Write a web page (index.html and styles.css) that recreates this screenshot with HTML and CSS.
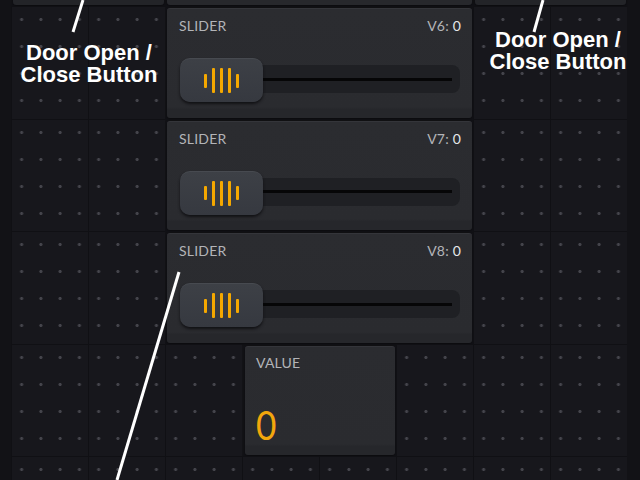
FILE: index.html
```html
<!DOCTYPE html>
<html lang="en">
<head>
  <meta charset="UTF-8" />
  <meta name="viewport" content="width=device-width, initial-scale=1" />
  <title>Slider Dashboard</title>
  <link rel="stylesheet" href="styles.css">
</head>
<body>
  <div class="board">
    <!-- widgets from the row above, only their bottoms show -->
    <div class="widget top-left"></div>
    <div class="widget top-mid"></div>
    <div class="widget top-right"></div>

    <div class="widget slider row-2">
      <div class="slider-head">
        <span class="slider-label">SLIDER</span>
        <span class="slider-pin">V6: <b>0</b></span>
      </div>
      <div class="track">
        <div class="knob"><span class="short"></span><span></span><span></span><span></span><span class="short"></span></div>
        <div class="rail"></div>
      </div>
    </div>

    <div class="widget slider row-3">
      <div class="slider-head">
        <span class="slider-label">SLIDER</span>
        <span class="slider-pin">V7: <b>0</b></span>
      </div>
      <div class="track">
        <div class="knob"><span class="short"></span><span></span><span></span><span></span><span class="short"></span></div>
        <div class="rail"></div>
      </div>
    </div>

    <div class="widget slider row-4">
      <div class="slider-head">
        <span class="slider-label">SLIDER</span>
        <span class="slider-pin">V8: <b>0</b></span>
      </div>
      <div class="track">
        <div class="knob"><span class="short"></span><span></span><span></span><span></span><span class="short"></span></div>
        <div class="rail"></div>
      </div>
    </div>

    <div class="widget value-box">
      <span class="slider-label">VALUE</span>
      <span class="value-num">0</span>
    </div>

    <!-- empty grid cells -->
    <div class="cell"></div><div class="cell"></div><div class="cell"></div><div class="cell"></div>
    <div class="cell"></div><div class="cell"></div><div class="cell"></div><div class="cell"></div>
    <div class="cell"></div><div class="cell"></div><div class="cell"></div><div class="cell"></div>
    <div class="cell"></div><div class="cell"></div><div class="cell"></div><div class="cell"></div>
    <div class="cell"></div><div class="cell"></div>
    <div class="cell"></div><div class="cell"></div><div class="cell"></div><div class="cell"></div>
    <div class="cell"></div><div class="cell"></div><div class="cell"></div><div class="cell"></div>
  </div>

  <!-- annotations -->
  <svg class="pointers" width="640" height="480" viewBox="0 0 640 480">
    <line x1="83" y1="0" x2="73" y2="32" />
    <line x1="543" y1="0" x2="534" y2="32" />
    <line x1="179" y1="272" x2="117" y2="480" />
  </svg>
  <div class="note note-left">Door Open /<br>Close Button</div>
  <div class="note note-right">Door Open /<br>Close Button</div>
</body>
</html>
```

FILE: styles.css
```css
body {
  margin: 0;
  width: 640px;
  height: 480px;
  overflow: hidden;
  background: #121216;
  font-family: Lato, "Open Sans", sans-serif;
  color: #b3b4b8;
}

.board {
  display: grid;
  grid-template-columns: repeat(8, 77px);
  grid-template-rows: repeat(5, 112.5px) 24px;
  margin: -106.5px 0 0 11px;
}

.cell {
  border-left: 1px solid #101014;
  border-top: 1px solid #101014;
  background-color: #17171c;
  background-image: radial-gradient(circle, #45454c 0 1.2px, transparent 1.9px);
  background-size: 19.25px 27px;
  background-position: 0 -1px;
}

.widget {
  margin: 2px 1px 1px 2px;
  border-radius: 3px;
  background: linear-gradient(#2b2c30 0, #2a2b2f 90%, #26272b 92%);
  border-top: 1px solid #34353a;
  box-shadow: 0 1px 2px #0b0b0e;
  box-sizing: border-box;
}

.top-left { grid-row: 1; grid-column: 1 / 3; background: #232428; }
.top-mid { grid-row: 1; grid-column: 3 / 7; background: #27282c; }
.top-right { grid-row: 1; grid-column: 7 / 9; background: #232428; }

.slider {
  grid-column: 3 / 7;
  padding: 9px 11px 0 12px;
}

.row-2 { grid-row: 2; }
.row-3 { grid-row: 3; }
.row-4 { grid-row: 4; }

.slider-head {
  display: flex;
  justify-content: space-between;
  font-size: 14px;
  line-height: 16px;
  letter-spacing: 0.2px;
}

.slider-pin b {
  font-weight: normal;
  color: #e6e7ea;
}

.track {
  display: flex;
  align-items: center;
  height: 28px;
  margin: 31px 1px 0 1px;
  border-radius: 8px;
  background: #1f2024;
}

.knob {
  display: flex;
  align-items: center;
  justify-content: center;
  gap: 5px;
  width: 83px;
  height: 44px;
  margin-top: 2px;
  border-radius: 10px;
  background: linear-gradient(#3d4046, #363940);
  border-top: 1px solid #474a50;
  box-sizing: border-box;
  box-shadow: 0 2px 3px #111114;
}

.knob span {
  width: 3px;
  height: 25px;
  border-radius: 1px;
  background: #f5a800;
}

.knob span.short {
  height: 14px;
}

.rail {
  flex: 1;
  height: 3px;
  margin-right: 8px;
  background: #060607;
}

.value-box {
  grid-row: 5;
  grid-column: 4 / 6;
  margin: 2px 1px 1px 3px;
  padding: 8px 11px 0 11px;
  display: flex;
  flex-direction: column;
}

.value-box .slider-label {
  font-size: 14px;
  line-height: 16px;
  letter-spacing: 0.2px;
}

.value-num {
  align-self: flex-start;
  margin-top: 34px;
  font-size: 40px;
  font-weight: normal;
  line-height: 40px;
  color: #f2a60c;
  transform: scaleX(0.88);
  transform-origin: left center;
}

.pointers {
  position: absolute;
  top: 0;
  left: 0;
}

.pointers line {
  stroke: #fff;
  stroke-width: 3;
}

.note {
  position: absolute;
  width: 180px;
  text-align: center;
  font-family: "Liberation Sans", Arial, sans-serif;
  font-weight: bold;
  font-size: 22px;
  line-height: 22px;
  color: #fff;
}

.note-left {
  top: 42px;
  left: -1px;
}

.note-right {
  top: 29px;
  left: 468px;
}
```
